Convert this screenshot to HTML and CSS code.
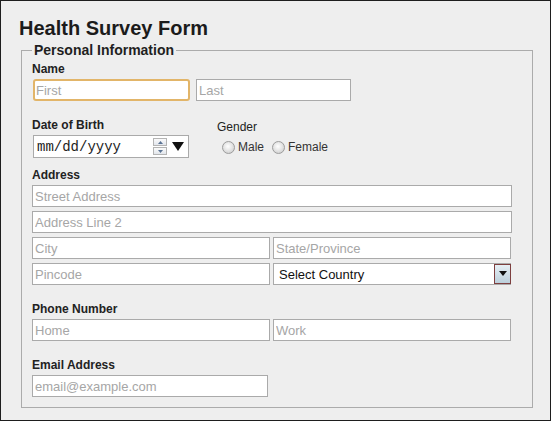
FILE: index.html
```html
<!DOCTYPE html>
<html lang="en">
<head>
<meta charset="utf-8">
<title>Health Survey Form</title>
<link rel="stylesheet" href="styles.css">
</head>
<body>
<div class="page">
  <h1 class="title">Health Survey Form</h1>
  <fieldset class="section">
    <legend class="legend">Personal Information</legend>

    <div class="group">
      <label class="label">Name</label>
      <div class="pair name-pair">
        <input class="field field-first focused" placeholder="First">
        <input class="field field-last" placeholder="Last">
      </div>
    </div>

    <div class="dob-row">
      <div class="dob">
        <label class="label">Date of Birth</label>
        <div class="date">
          <span class="date-text">mm/dd/yyyy</span>
          <span class="spin">
            <span class="spin-btn"><svg width="5" height="3" viewBox="0 0 5 3"><polygon points="0,3 5,3 2.5,0" fill="#5a7394"/></svg></span>
            <span class="spin-btn"><svg width="5" height="3" viewBox="0 0 5 3"><polygon points="0,0 5,0 2.5,3" fill="#5a7394"/></svg></span>
          </span>
          <svg class="date-drop" width="12" height="9" viewBox="0 0 12 9"><polygon points="0,0 12,0 6,9" fill="#111"/></svg>
        </div>
      </div>
      <div class="gender">
        <span class="label label-plain">Gender</span>
        <div class="radios">
          <label class="radio"><span class="radio-dot"></span>Male</label>
          <label class="radio"><span class="radio-dot"></span>Female</label>
        </div>
      </div>
    </div>

    <div class="group group-address">
      <label class="label">Address</label>
      <div class="stack">
        <input class="field field-full" placeholder="Street Address">
        <input class="field field-full" placeholder="Address Line 2">
        <div class="pair">
          <input class="field field-half" placeholder="City">
          <input class="field field-half" placeholder="State/Province">
        </div>
        <div class="pair">
          <input class="field field-half" placeholder="Pincode">
          <div class="select-wrap">
            <select class="field select"><option>Select Country</option></select>
            <span class="select-btn"><svg width="8" height="5" viewBox="0 0 8 5"><polygon points="0,0 8,0 4,5" fill="#111"/></svg></span>
          </div>
        </div>
      </div>
    </div>

    <div class="group group-spaced">
      <label class="label">Phone Number</label>
      <div class="pair">
        <input class="field field-half" placeholder="Home">
        <input class="field field-half" placeholder="Work">
      </div>
    </div>

    <div class="group group-spaced">
      <label class="label">Email Address</label>
      <input class="field field-email" placeholder="email@example.com">
    </div>
  </fieldset>
</div>
</body>
</html>
```
FILE: styles.css
```css
* { box-sizing: border-box; }

html, body {
  margin: 0;
  padding: 0;
}

body {
  background: #eeeeee;
  font-family: "Liberation Sans", Arial, sans-serif;
  color: #222;
}

.page {
  width: 551px;
  height: 421px;
  border: 1px solid #1e1e1e;
  padding: 16px 18px 0;
  background: #eeeeee;
}

.title {
  margin: 0;
  font-size: 20px;
  line-height: 23px;
  font-weight: bold;
  color: #1b1b1b;
}

.section {
  margin: 2px 0 0 2px;
  width: 512px;
  min-width: 0;
  border: 1px solid #ababab;
  padding: 4px 20px 10px 10px;
}

.legend {
  padding: 0 2px;
  font-size: 14px;
  line-height: 16px;
  font-weight: bold;
  color: #1f1f1f;
}

.label {
  display: block;
  font-size: 12px;
  line-height: 15px;
  font-weight: bold;
  color: #222;
  margin-bottom: 2px;
}

.label-plain {
  font-weight: normal;
}

.field {
  display: block;
  height: 22px;
  margin: 0;
  border: 1px solid #aaaaaa;
  border-radius: 0;
  background: #fff;
  padding: 0 0 0 2px;
  font: 13px "Liberation Sans", Arial, sans-serif;
  color: #222;
  outline: none;
}

.field::placeholder {
  color: #a6a6a6;
}

.pair {
  display: flex;
  gap: 3px;
}

.name-pair {
  gap: 6px;
}

.field-first {
  margin-left: 1px;
  width: 157px;
}

.focused {
  border: 2px solid #e2b569;
  border-radius: 3px;
  padding-left: 1px;
}

.field-last {
  width: 155px;
}

.dob-row {
  display: flex;
  margin-top: 17px;
}

.dob {
  width: 185px;
}

.date {
  margin-left: 1px;
  width: 156px;
  height: 23px;
  border: 1px solid #aaaaaa;
  background: #fff;
  display: flex;
  align-items: center;
  padding: 0 4px 0 3px;
}

.date-text {
  flex: 1;
  font: 14px "Liberation Mono", "Courier New", monospace;
  color: #222;
}

.spin {
  display: flex;
  flex-direction: column;
  gap: 1px;
  width: 14px;
  margin-right: 5px;
}

.spin-btn {
  height: 8px;
  border: 1px solid #b4b4b4;
  background: linear-gradient(#fbfbfb, #e2e6ec);
  display: flex;
  align-items: center;
  justify-content: center;
}

.date-drop {
  display: block;
}

.gender {
  padding-top: 2px;
}

.radios {
  display: flex;
  gap: 8px;
  margin: 4px 0 0 5px;
}

.radio {
  display: flex;
  align-items: center;
  gap: 3px;
  font-size: 12px;
  line-height: 16px;
  color: #333;
}

.radio-dot {
  width: 13px;
  height: 13px;
  border-radius: 50%;
  border: 1px solid #9c9c9c;
  background: radial-gradient(circle at 45% 40%, #ffffff 0, #e6e6e6 45%, #c4c4c4 100%);
}

.group-address {
  margin-top: 10px;
}

.group-spaced {
  margin-top: 17px;
}

.stack {
  display: flex;
  flex-direction: column;
  gap: 4px;
}

.field-full {
  width: 480px;
}

.field-half {
  width: 238px;
}

.field-email {
  width: 236px;
}

.select-wrap {
  position: relative;
  width: 238px;
}

.select {
  width: 100%;
  -webkit-appearance: none;
  appearance: none;
  padding-left: 5px;
  color: #111;
}

.select-btn {
  position: absolute;
  right: 0;
  top: 1px;
  width: 17px;
  height: 20px;
  border: 1px solid #7d3f3f;
  background: linear-gradient(#e6eff5, #bccfdb);
  display: flex;
  align-items: flex-start;
  justify-content: center;
  padding-top: 6px;
  pointer-events: none;
}
```
